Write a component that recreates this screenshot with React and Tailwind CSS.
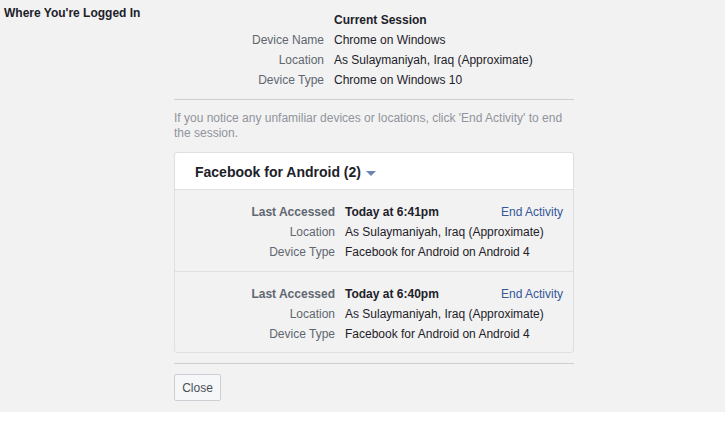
export default function App() {
  const current = [
    ["Device Name", "Chrome on Windows"],
    ["Location", "As Sulaymaniyah, Iraq (Approximate)"],
    ["Device Type", "Chrome on Windows 10"],
  ];

  const sessions = [
    { time: "Today at 6:41pm" },
    { time: "Today at 6:40pm" },
  ];

  return (
    <div className="w-[725px] h-[421px] bg-white font-['Liberation_Sans',Arial,sans-serif] text-[12px] text-[#1d2129]">
      <div className="h-[412px] bg-[#f2f2f2] flex">
        {/* left label */}
        <div className="w-[174px] pl-[4px] pt-[5px]">
          <div className="font-bold leading-[16px]">Where You're Logged In</div>
        </div>

        {/* right column */}
        <div className="w-[400px] pt-[10px]">
          <div className="flex h-[20px] items-center">
            <div className="w-[150px]" />
            <div className="pl-[10px] font-bold">Current Session</div>
          </div>
          {current.map(([label, value]) => (
            <div key={label} className="flex h-[20px] items-center">
              <div className="w-[150px] text-right text-[#616770]">{label}</div>
              <div className="pl-[10px]">{value}</div>
            </div>
          ))}

          <div className="mt-[9px] border-t border-[#ccd0d5]" />

          <p className="pt-[11px] leading-[15px] text-[#90949c]">
            If you notice any unfamiliar devices or locations, click 'End Activity' to end the session.
          </p>

          {/* sessions box */}
          <div className="mt-[11px] border border-[#dddfe2] rounded-[3px] bg-[#f2f2f2]">
            <div className="h-[37px] bg-white border-b border-[#dddfe2] flex items-center pl-[20px] pt-[3px] rounded-t-[3px]">
              <span className="text-[14px] font-bold text-[#1d2129]">Facebook for Android (2)</span>
              <svg width="10" height="6" viewBox="0 0 10 6" className="ml-[5px] mt-[2px]">
                <path d="M0 0 L10 0 L5 5 Z" fill="#6d84b4" />
              </svg>
            </div>
            {sessions.map((s, i) => (
              <div
                key={i}
                className={i > 0 ? "pt-[12px] pb-[8px] border-t border-[#dddfe2]" : "pt-[12px] pb-[9px]"}
              >
                <div className="flex h-[20px] items-center">
                  <div className="w-[160px] text-right text-[#616770] font-bold">Last Accessed</div>
                  <div className="pl-[10px] font-bold flex-1">{s.time}</div>
                  <a className="pr-[10px] text-[#365899]">End Activity</a>
                </div>
                <div className="flex h-[20px] items-center">
                  <div className="w-[160px] text-right text-[#616770]">Location</div>
                  <div className="pl-[10px]">As Sulaymaniyah, Iraq (Approximate)</div>
                </div>
                <div className="flex h-[20px] items-center">
                  <div className="w-[160px] text-right text-[#616770]">Device Type</div>
                  <div className="pl-[10px]">Facebook for Android on Android 4</div>
                </div>
              </div>
            ))}
          </div>

          <div className="mt-[10px] border-t border-[#ccd0d5]" />

          <button className="mt-[10px] h-[27px] w-[47px] border border-[#ccd0d5] rounded-[2px] bg-[#f6f7f9] text-[#4b4f56] text-[12px]">
            Close
          </button>
        </div>
      </div>
    </div>
  );
}
